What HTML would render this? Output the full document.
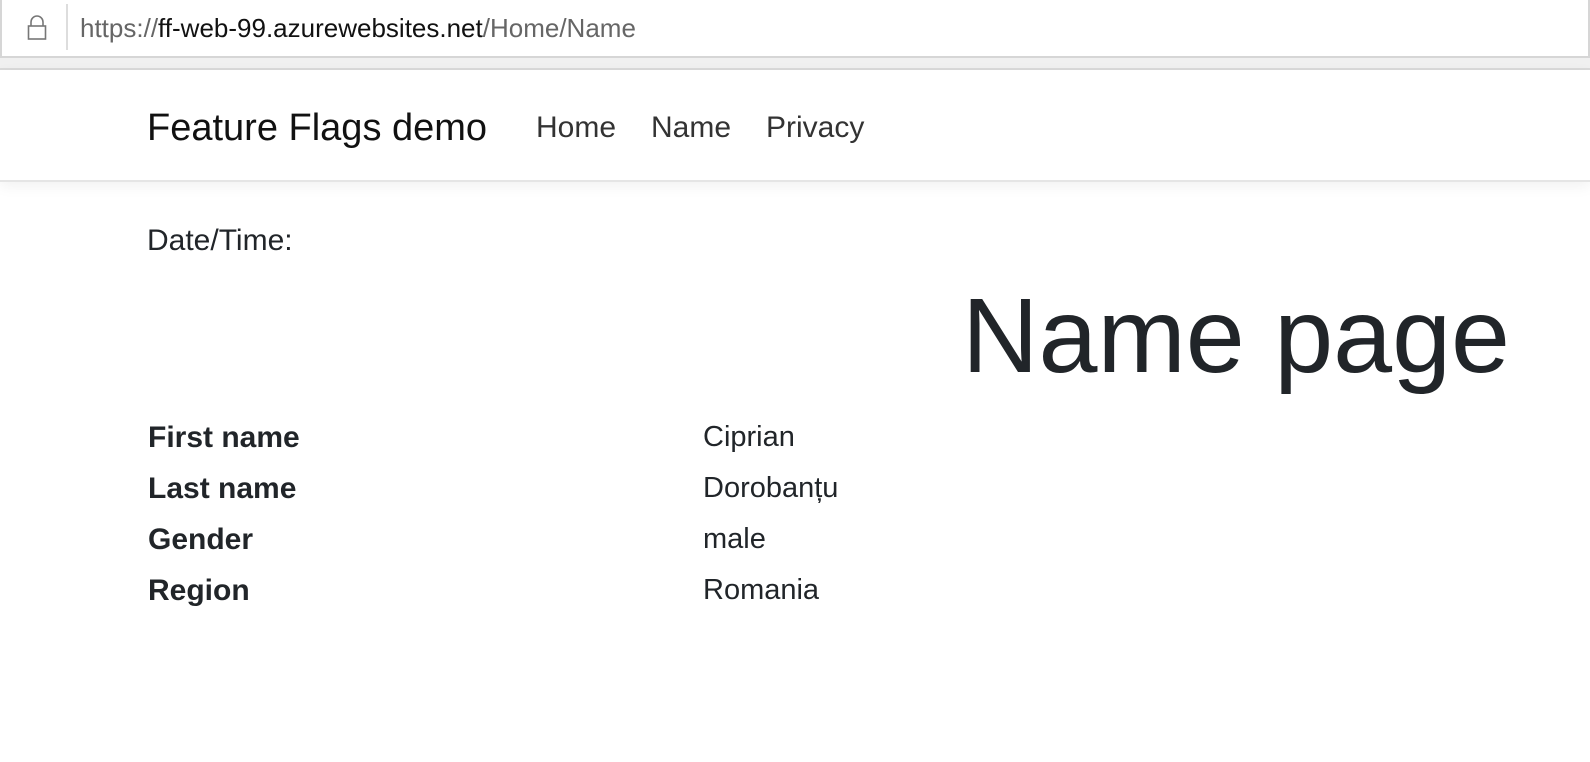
<!DOCTYPE html>
<html><head><style>
body{margin:0;width:1590px;height:762px;background:#fff;font-family:"Liberation Sans",sans-serif;color:#212529;position:relative;overflow:hidden}
.abs{position:absolute;white-space:nowrap}
.bar{position:absolute;left:0;top:0;width:1590px;height:58px;border:2px solid #d6d6d6;border-top:none;box-sizing:border-box;background:#fff}
.sep{position:absolute;left:0;top:58px;width:1590px;height:10px;background:#f0f0f0;border-bottom:2px solid #dadada}
.nav{position:absolute;left:0;top:70px;width:1590px;height:110px;border-bottom:2px solid #e5e5e5;box-shadow:0 4px 14px rgba(0,0,0,.06)}
.lbl{font-weight:bold;font-size:30px;left:148px}
.val{font-size:29px;left:703px}
</style></head><body>
<div class="bar"></div>
<svg class="abs" style="left:26px;top:14px" width="22" height="28" viewBox="0 0 22 28"><path d="M5 12V8a6 6 0 0 1 12 0v4" fill="none" stroke="#777" stroke-width="1.6"/><rect x="2.5" y="12" width="17" height="13" fill="none" stroke="#777" stroke-width="1.6"/></svg>
<div class="abs" style="left:66px;top:4px;width:2px;height:46px;background:#ddd"></div>
<div class="abs" style="left:80px;top:13px;font-size:26px;color:#666">https://<span style="color:#111">ff-web-99.azurewebsites.net</span>/Home/Name</div>
<div class="sep"></div>
<div class="nav"></div>
<div class="abs" style="left:147px;top:107px;font-size:38px;color:#111">Feature Flags demo</div>
<div class="abs" style="left:536px;top:111px;font-size:30px;color:#333">Home</div>
<div class="abs" style="left:651px;top:111px;font-size:30px;color:#333">Name</div>
<div class="abs" style="left:766px;top:111px;font-size:30px;color:#333">Privacy</div>
<div class="abs" style="left:147px;top:224px;font-size:30px">Date/Time:</div>
<div class="abs" style="right:80px;top:276px;font-size:106px;font-weight:300">Name page</div>
<div class="abs lbl" style="top:421px">First name</div>
<div class="abs lbl" style="top:472px">Last name</div>
<div class="abs lbl" style="top:523px">Gender</div>
<div class="abs lbl" style="top:574px">Region</div>
<div class="abs val" style="top:421px">Ciprian</div>
<div class="abs val" style="top:472px">Dorobanțu</div>
<div class="abs val" style="top:523px">male</div>
<div class="abs val" style="top:574px">Romania</div>
</body></html>
